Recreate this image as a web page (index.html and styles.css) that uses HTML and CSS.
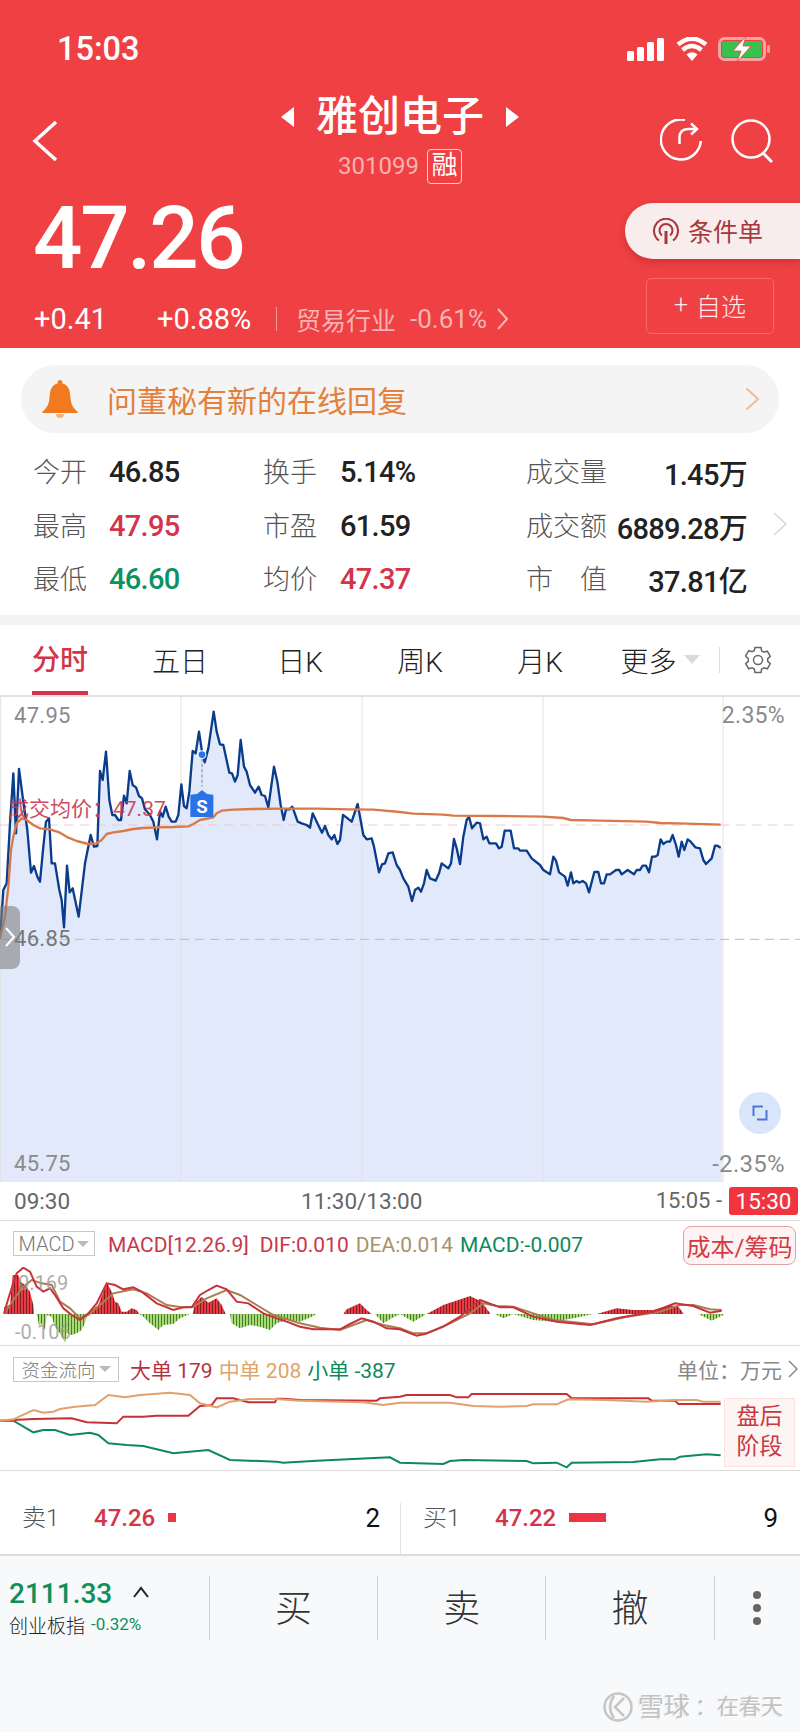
FILE: index.html
```html
<!DOCTYPE html>
<html lang="zh">
<head>
<meta charset="utf-8">
<title>雅创电子</title>
<link rel="stylesheet" href="styles.css">
</head>
<body>
<div class="page">
  <header class="header">
    <div class="status">
      <span class="clock">15:03</span>
      <span class="status-icons">
        <svg class="i-signal" viewBox="0 0 37 23"><rect x="0" y="13" width="7" height="10" rx="1.500"/><rect x="10" y="9" width="7" height="14" rx="1.500"/><rect x="20" y="4" width="7" height="19" rx="1.500"/><rect x="30" y="0" width="7" height="23" rx="1.500"/></svg>
        <svg class="i-wifi" viewBox="0 0 32 24"><path d="M16 24 10.500 17.500Q16 13 21.500 17.500Z" fill="#fff"/><path d="M6.500 13Q16 5 25.500 13M2 7.500Q16-4 30 7.500" fill="none" stroke="#fff" stroke-width="4.500"/></svg>
        <svg class="i-batt" viewBox="0 0 52 26"><rect x="1.500" y="2.500" width="45" height="21" rx="5" fill="none" stroke="#f7a3a3" stroke-width="3"/><rect x="4" y="5" width="40" height="16" rx="2" fill="#37c24e"/><rect x="49" y="9" width="3" height="8" rx="1.500" fill="#f7a3a3"/><path d="M28 0 15 15h8l-4 11 14-16h-8z" fill="#fff" stroke="#ef4043" stroke-width=".8"/></svg>
      </span>
    </div>
    <nav class="nav">
      <svg class="i-back" viewBox="0 0 26 42"><path d="M24 2 3 21l21 19" fill="none" stroke="#fff" stroke-width="3.500"/></svg>
      <div class="title-block">
        <div class="title-row">
          <span class="tri tri-l"></span>
          <span class="title">雅创电子</span>
          <span class="tri tri-r"></span>
        </div>
        <div class="code-row"><span class="code">301099</span><span class="rong">融</span></div>
      </div>
      <div class="nav-actions">
        <svg class="i-refresh" viewBox="0 0 42 42"><path d="M25 .9A20 20 0 1 0 40.800 22" fill="none" stroke="#fff" stroke-width="2.500"/><path d="M19.500 25V19Q19.500 10 28 10H36" fill="none" stroke="#fff" stroke-width="2.500"/><path d="M31 4.500l6 5.500-6 5.500" fill="none" stroke="#fff" stroke-width="2.500"/></svg>
        <svg class="i-search" viewBox="0 0 42 44"><circle cx="20" cy="20" r="18.500" fill="none" stroke="#fff" stroke-width="2.500"/><path d="m32 34 9 9" stroke="#fff" stroke-width="3"/></svg>
      </div>
    </nav>
    <div class="quote">
      <div class="quote-left">
        <div class="price">47.26</div>
        <div class="change-row">
          <span class="chg chg-a">+0.41</span>
          <span class="chg chg-b">+0.88%</span>
          <span class="sep"></span>
          <span class="ind">贸易行业</span>
          <span class="ind-val">-0.61%</span>
          <svg class="i-chev-sm" viewBox="0 0 11 22"><path d="M1 1l9 10-9 10" fill="none" stroke="#f9b4b4" stroke-width="2"/></svg>
        </div>
      </div>
      <div class="quote-right">
        <div class="pill">
          <svg class="i-cond" viewBox="0 0 26 26"><path d="M6 22.500A12 12 0 1 1 20 22.500" fill="none" stroke="#a8373b" stroke-width="2"/><path d="M9 17.500A6.500 6.500 0 1 1 17 17.500" fill="none" stroke="#a8373b" stroke-width="2"/><path d="M13 13v13" stroke="#a8373b" stroke-width="3"/></svg>
          <span class="pill-text">条件单</span>
        </div>
        <div class="watch"><span class="plus">+</span><span>自选</span></div>
      </div>
    </div>
  </header>

  <div class="notice">
    <svg class="i-bell" viewBox="0 0 36 38"><path d="M18 0c2 0 2.500 2 2.500 3.500C27 5 28 11 28.500 18c.5 6 2.500 10 7 13.500V33H.5v-1.500C5 28 7 24 7.500 18 8 11 9 5 15.500 3.500 15.500 2 16 0 18 0z" fill="#f2791d"/><path d="M14 34a4 4 0 0 0 8 0" fill="#f6b27a"/></svg>
    <span class="notice-text">问董秘有新的在线回复</span>
    <svg class="i-chev-n" viewBox="0 0 15 24"><path d="M1.500 1.500 13 12 1.500 22.500" fill="none" stroke="#f3bb92" stroke-width="2"/></svg>
  </div>

  <section class="stats">
    <span class="lbl">今开</span><span class="val">46.85</span>
    <span class="lbl">换手</span><span class="val">5.14%</span>
    <span class="lbl">成交量</span><span class="val val-r">1.45万</span>
    <span class="lbl">最高</span><span class="val up">47.95</span>
    <span class="lbl">市盈</span><span class="val">61.59</span>
    <span class="lbl">成交额</span><span class="val val-r">6889.28万</span>
    <span class="lbl">最低</span><span class="val down">46.60</span>
    <span class="lbl">均价</span><span class="val up">47.37</span>
    <span class="lbl">市　值</span><span class="val val-r">37.81亿</span>
    <svg class="i-chev-s" viewBox="0 0 14 24"><path d="M1 1l12 11L1 23" fill="none" stroke="#d4d4d4" stroke-width="1.500"/></svg>
  </section>

  <div class="gap-band"></div>

  <div class="tabs">
    <span class="tab tab-active"><span class="tab-on">分时</span></span>
    <span class="tab">五日</span>
    <span class="tab">日K</span>
    <span class="tab">周K</span>
    <span class="tab">月K</span>
    <span class="tab">更多<i class="tab-tri"></i></span>
    <svg class="i-gear" viewBox="0 0 28 28"><path d="M11 1.500h6l.7 3.500 2.300 1.300 3.300-1.100 3 5.200-2.600 2.300v2.600l2.600 2.300-3 5.200-3.300-1.100-2.300 1.300-.7 3.500h-6l-.7-3.500-2.300-1.300-3.300 1.100-3-5.200 2.600-2.300v-2.600L1.700 9.900l3-5.200L8 5.800l2.300-1.300z" fill="none" stroke="#666" stroke-width="1.500"/><circle cx="14" cy="14" r="4.500" fill="none" stroke="#666" stroke-width="1.500"/></svg>
  </div>

  <section class="chart">
    <svg class="chart-svg" viewBox="0 21 2400 1455" preserveAspectRatio="none">
      <path class="area" d="M0,745 10,600 20,580 30,400 40,250 48,430 57,237 68,320 82,420 93,548 102,528 112,560 120,575 130,470 138,395 147,385 155,520 165,520 178,600 185,630 192,712 201,527 209,607 218,595 236,680 255,520 272,435 282,470 292,468 300,243 308,270 318,185 328,330 337,375 345,375 355,390 363,390 372,317 380,340 389,243 398,285 408,292 417,318 426,325 435,358 450,375 460,395 471,448 480,365 488,380 497,350 506,380 515,395 527,395 535,375 544,283 552,348 560,355 568,305 578,183 587,190 597,125 606,185 614,217 625,175 641,65 650,125 660,163 670,165 688,248 696,250 705,275 713,255 722,150 732,230 740,245 750,285 765,308 776,290 785,315 795,318 805,352 822,230 832,275 842,345 851,390 858,358 868,358 877,350 893,395 905,400 920,405 930,413 938,370 950,395 966,428 975,408 985,435 995,448 1003,435 1012,462 1020,450 1029,375 1040,383 1055,395 1073,342 1090,435 1100,448 1115,445 1122,470 1137,547 1146,523 1155,520 1165,490 1178,487 1190,525 1200,540 1210,565 1225,590 1236,633 1245,600 1255,593 1263,605 1272,580 1280,540 1290,565 1307,572 1317,550 1325,520 1345,535 1353,520 1362,447 1370,475 1380,522 1390,440 1400,390 1407,380 1416,415 1430,398 1440,400 1450,448 1460,440 1468,460 1488,460 1497,475 1505,470 1514,422 1532,422 1542,475 1555,475 1560,482 1580,482 1595,505 1620,525 1630,540 1650,553 1660,500 1668,512 1677,547 1695,560 1703,587 1713,547 1720,580 1730,573 1737,578 1748,573 1758,580 1767,607 1783,546 1795,546 1803,580 1812,580 1820,553 1830,553 1848,540 1858,540 1865,553 1883,540 1902,553 1910,540 1920,540 1928,527 1938,527 1947,547 1956,500 1965,500 1973,495 1982,448 1990,462 2000,455 2010,455 2018,435 2028,465 2036,500 2045,455 2053,480 2063,448 2072,455 2086,472 2100,475 2110,510 2118,522 2135,505 2145,467 2152,467 2166,473 2166,1476 0,1476Z"/>
      <path class="grid" d="M543 18V1476M1086 18V1476M1629 18V1476M2169 18V1476M2 18V1476"/>
      <path class="dash-pink" d="M0 405H2400"/>
      <path class="dash-grey" d="M0 748H2400"/>
      <polyline class="line-price" points="0,745 10,600 20,580 30,400 40,250 48,430 57,237 68,320 82,420 93,548 102,528 112,560 120,575 130,470 138,395 147,385 155,520 165,520 178,600 185,630 192,712 201,527 209,607 218,595 236,680 255,520 272,435 282,470 292,468 300,243 308,270 318,185 328,330 337,375 345,375 355,390 363,390 372,317 380,340 389,243 398,285 408,292 417,318 426,325 435,358 450,375 460,395 471,448 480,365 488,380 497,350 506,380 515,395 527,395 535,375 544,283 552,348 560,355 568,305 578,183 587,190 597,125 606,185 614,217 625,175 641,65 650,125 660,163 670,165 688,248 696,250 705,275 713,255 722,150 732,230 740,245 750,285 765,308 776,290 785,315 795,318 805,352 822,230 832,275 842,345 851,390 858,358 868,358 877,350 893,395 905,400 920,405 930,413 938,370 950,395 966,428 975,408 985,435 995,448 1003,435 1012,462 1020,450 1029,375 1040,383 1055,395 1073,342 1090,435 1100,448 1115,445 1122,470 1137,547 1146,523 1155,520 1165,490 1178,487 1190,525 1200,540 1210,565 1225,590 1236,633 1245,600 1255,593 1263,605 1272,580 1280,540 1290,565 1307,572 1317,550 1325,520 1345,535 1353,520 1362,447 1370,475 1380,522 1390,440 1400,390 1407,380 1416,415 1430,398 1440,400 1450,448 1460,440 1468,460 1488,460 1497,475 1505,470 1514,422 1532,422 1542,475 1555,475 1560,482 1580,482 1595,505 1620,525 1630,540 1650,553 1660,500 1668,512 1677,547 1695,560 1703,587 1713,547 1720,580 1730,573 1737,578 1748,573 1758,580 1767,607 1783,546 1795,546 1803,580 1812,580 1820,553 1830,553 1848,540 1858,540 1865,553 1883,540 1902,553 1910,540 1920,540 1928,527 1938,527 1947,547 1956,500 1965,500 1973,495 1982,448 1990,462 2000,455 2010,455 2018,435 2028,465 2036,500 2045,455 2053,480 2063,448 2072,455 2086,472 2100,475 2110,510 2118,522 2135,505 2145,467 2152,467 2162,473"/>
      <polyline class="line-avg" points="0,745 15,680 25,590 33,480 40,440 50,400 65,385 80,390 100,405 120,415 150,418 180,428 205,443 230,453 265,462 290,460 305,450 320,432 340,427 370,423 400,417 430,414 470,412 520,411 565,409 580,402 600,390 640,382 650,370 665,362 700,359 760,357 850,356 950,356 1050,358 1120,359 1200,366 1240,371 1330,374 1360,377 1500,378 1630,380 1690,384 1712,390 1800,392 1940,395 1980,399 2060,401 2162,404"/>
      <path class="mark-dash" d="M606 205V290"/>
      <circle class="mark-dot" cx="606" cy="194" r="12"/>
      <path class="mark-box" d="M571 314l20-2 15-12 15 12 19 2V381H571Z"/>
      <text class="mark-s" x="606" y="368">S</text>
    </svg>
    <span class="ax ax-top">47.95</span>
    <span class="ax ax-mid">46.85</span>
    <span class="ax ax-bot">45.75</span>
    <span class="ax ax-rt">2.35%</span>
    <span class="ax ax-rb">-2.35%</span>
    <span class="avg-tip">成交均价：47.37</span>
    <span class="handle"><svg class="i-handle" viewBox="0 0 10 20"><path d="M1 1l8 9-8 9" fill="none" stroke="#fff" stroke-width="2"/></svg></span>
    <span class="expand"><svg class="i-expand" viewBox="0 0 16 16"><path d="M1.500 11V1.500H11M14.500 5V14.500H5" fill="none" stroke="#4a78d8" stroke-width="2"/></svg></span>
  </section>

  <div class="time-axis">
    <span>09:30</span>
    <span class="t-mid">11:30/13:00</span>
    <span class="t-end">15:05 -</span>
    <span class="t-pill">15:30</span>
  </div>

  <section class="panel panel-macd">
    <div class="panel-head">
      <span class="sel sel-macd">MACD<i class="sel-tri"></i></span>
      <span class="c-red c-first">MACD[12.26.9]</span>
      <span class="c-red">DIF:0.010</span>
      <span class="c-tan">DEA:0.014</span>
      <span class="c-green">MACD:-0.007</span>
      <span class="cost-btn">成本/筹码</span>
    </div>
    <div class="plot">
      <svg class="macd-svg" viewBox="0 291 2400 234" preserveAspectRatio="none">
        <defs>
          <pattern id="rs" width="9" height="12" patternUnits="userSpaceOnUse"><rect width="9" height="12" fill="#ea3a42"/><rect x="6" width="3" height="12" fill="#7a2226"/></pattern>
          <pattern id="gs" width="9" height="12" patternUnits="userSpaceOnUse"><rect width="9" height="12" fill="#a6dc70"/><rect x="6" width="3" height="12" fill="#4a7a34"/></pattern>
        </defs>
        <path fill="url(#rs)" d="M12,432 12,412 30,405 38,315 55,315 62,335 75,345 90,365 100,405 102,432ZM272,432 275,420 295,405 310,365 322,340 335,365 345,395 355,400 365,425 380,425 395,415 410,420 418,432ZM578,432 585,400 605,380 625,398 650,385 665,405 677,432ZM1030,432 1040,418 1080,400 1100,420 1115,432ZM1280,432 1330,405 1375,390 1410,378 1445,395 1470,430 1470,432ZM1790,432 1850,415 1900,420 1960,420 2010,405 2035,410 2050,430 2050,432Z"/>
        <path fill="url(#gs)" d="M108,432 112,440 118,470 125,460 135,480 140,435 155,440 165,470 180,490 195,518 200,490 215,495 230,490 245,480 255,460 262,432ZM418,432 430,440 450,460 475,480 490,465 520,462 540,445 570,432ZM690,432 695,460 720,475 750,465 780,470 810,480 830,460 860,450 900,455 935,440 950,432ZM1125,432 1150,460 1175,445 1200,432 1240,455 1275,435 1275,432ZM1485,432 1510,445 1540,432 1600,450 1660,455 1720,445 1780,432ZM2095,432 2135,452 2170,435 2170,432Z"/>
        <polyline class="line-dea" points="12,432 40,390 70,350 95,330 125,340 155,345 180,395 210,415 240,445 265,435 300,405 340,370 400,358 440,370 500,405 545,412 580,410 620,385 680,360 720,375 770,405 820,435 900,460 960,473 1020,480 1060,465 1100,450 1150,465 1200,475 1240,490 1280,490 1350,460 1410,430 1450,400 1490,408 1540,410 1600,430 1660,450 1780,463 1880,440 1980,425 2040,405 2080,405 2130,418 2165,420"/>
        <polyline class="line-dif" points="12,430 30,370 50,310 70,293 90,305 110,350 130,365 150,355 165,375 190,415 215,435 240,450 265,430 290,400 320,340 345,345 370,358 400,352 425,365 470,400 520,420 550,412 575,412 600,375 625,360 650,347 680,358 710,395 745,400 790,430 830,445 860,455 900,470 940,478 1020,478 1050,462 1085,445 1120,455 1160,475 1200,478 1250,497 1275,492 1330,470 1380,440 1440,390 1500,412 1540,412 1600,440 1670,455 1770,465 1850,445 1960,425 2025,400 2080,408 2130,428 2165,422"/>
      </svg>
      <span class="macd-hi">0.169</span>
      <span class="macd-lo">-0.106</span>
    </div>
  </section>

  <section class="panel panel-flow">
    <div class="panel-head panel-head-flow">
      <span class="sel sel-flow">资金流向<i class="sel-tri"></i></span>
      <span class="c-big">大单 179</span>
      <span class="c-mid">中单 208</span>
      <span class="c-green">小单 -387</span>
      <span class="unit">单位：万元</span>
      <svg class="i-chev-u" viewBox="0 0 10 18"><path d="M1 1l8 8-8 8" fill="none" stroke="#888" stroke-width="1.500"/></svg>
    </div>
    <div class="plot">
      <svg class="flow-svg" viewBox="0 648 2400 252" preserveAspectRatio="none">
        <polyline class="fl-green" points="0,752 40,752 100,787 130,780 165,780 210,795 270,788 295,795 325,820 380,825 430,828 520,850 625,840 690,870 830,875 850,878 950,872 1170,862 1200,878 1330,882 1350,873 1390,870 1580,873 1600,880 1670,878 1700,892 1715,878 1900,876 1980,868 2025,868 2040,860 2120,853 2162,856"/>
        <polyline class="fl-red" points="0,752 40,750 100,747 215,745 260,757 350,760 370,740 430,740 470,737 565,737 600,708 635,705 650,685 700,685 745,697 825,697 830,686 850,686 900,690 1130,692 1140,685 1200,680 1220,675 1350,675 1370,682 1405,682 1415,672 1700,672 1715,685 1945,685 1955,692 2025,692 2035,702 2162,702"/>
        <polyline class="fl-orange" points="0,752 40,748 100,720 130,728 160,725 180,717 225,710 285,705 325,675 375,682 420,675 510,668 570,675 600,700 650,712 690,695 750,687 825,687 900,692 1090,697 1150,705 1200,698 1350,698 1420,708 1500,710 1580,708 1600,703 1670,703 1705,688 1820,690 1940,695 2030,690 2090,690 2110,695 2162,695"/>
      </svg>
      <div class="after-box">盘后<br>阶段</div>
    </div>
  </section>

  <section class="orders">
    <div class="side side-l">
      <span class="o-lbl">卖1</span>
      <span class="o-price">47.26</span>
      <i class="o-bar o-bar-s"></i>
      <span class="o-qty">2</span>
    </div>
    <div class="side side-r">
      <span class="o-lbl">买1</span>
      <span class="o-price">47.22</span>
      <i class="o-bar o-bar-b"></i>
      <span class="o-qty">9</span>
    </div>
  </section>

  <footer class="footer">
    <div class="index">
      <div class="idx-top"><span class="idx-val">2111.33</span><svg class="i-caret" viewBox="0 0 16 12"><path d="M1 11l7-9 7 9" fill="none" stroke="#222" stroke-width="2"/></svg></div>
      <div class="idx-sub"><span class="idx-name">创业板指</span><span class="idx-chg">-0.32%</span></div>
    </div>
    <div class="act">买</div>
    <div class="act">卖</div>
    <div class="act">撤</div>
    <div class="act act-more"><i class="dot"></i><i class="dot"></i><i class="dot"></i></div>
    <div class="wm">
      <svg class="i-wm" viewBox="0 0 30 30"><circle cx="15" cy="15" r="13.500" fill="none" stroke="#c6c6c6" stroke-width="2.500"/><path d="M11 4C6 11 6 19 11 26M21 6l-9 9 9 9" fill="none" stroke="#c6c6c6" stroke-width="2.500"/></svg>
      <span class="wm-a">雪球</span><span class="wm-b">：在春天</span>
    </div>
  </footer>
</div>
</body>
</html>
```

FILE: styles.css
```css
* { box-sizing: border-box; }
html, body { margin: 0; padding: 0; }
body { width: 800px; height: 1732px; overflow: hidden; background: #fff; font-family: Roboto, "Noto Sans CJK SC", sans-serif; color: #222; }
i { display: block; font-style: normal; }
svg { display: block; flex: none; }
.page { width: 800px; height: 1732px; display: flex; flex-direction: column; position: relative; }

/* header */
.header { height: 348px; background: #ef4043; color: #fff; display: flex; flex-direction: column; flex: none; }
.status { height: 96px; padding: 32px 30px 0 57px; display: flex; justify-content: space-between; align-items: flex-start; }
.clock { font-size: 32.500px; line-height: 34px; font-weight: 500; }
.status-icons { display: flex; gap: 10px; align-items: center; margin-top: 4px; }
.i-signal { width: 37px; height: 23px; fill: #fff; margin-right: 2px; }
.i-wifi { width: 32px; height: 24px; }
.i-batt { width: 52px; height: 26px; }

.nav { height: 104px; display: grid; grid-template-columns: 1fr auto 1fr; padding: 0 32px; }
.i-back { width: 26px; height: 42px; margin-top: 24px; }
.title-block { display: flex; flex-direction: column; align-items: center; }
.title-row { display: flex; align-items: center; gap: 22px; height: 48px; margin-top: -3px; }
.title { font-size: 42px; line-height: 48px; font-weight: 500; }
.tri { width: 0; height: 0; border-top: 10px solid transparent; border-bottom: 10px solid transparent; }
.tri-l { border-right: 13px solid #fff; }
.tri-r { border-left: 13px solid #fff; }
.code-row { display: flex; align-items: center; gap: 8px; margin-top: 7px; height: 36px; }
.code { font-size: 24px; color: #f9b1b1; }
.rong { width: 35px; height: 35px; border: 1px solid #fbd0d0; border-radius: 4px; font-size: 26px; line-height: 31px; text-align: center; color: #fff; }
.nav-actions { display: flex; justify-content: flex-end; gap: 29px; margin: 23px -5px 0 0; align-items: flex-start; }
.i-refresh { width: 42px; height: 42px; }
.i-search { width: 42px; height: 44px; }

.quote { flex: 1; display: flex; justify-content: space-between; min-height: 0; }
.quote-left { padding-left: 33px; display: flex; flex-direction: column; }
.price { font-size: 87px; line-height: 92px; font-weight: 500; letter-spacing: -2.300px; margin-top: -8px; }
.change-row { display: flex; align-items: center; margin-top: 17px; height: 36px; }
.chg { font-size: 29px; font-weight: 400; color: #fff; }
.chg-a { width: 124px; padding-left: 1px; }
.chg-b { width: 119px; white-space: nowrap; }
.sep { width: 1px; height: 24px; background: #f69a9a; margin-right: 19px; }
.ind { font-size: 25px; color: #f7b4b4; width: 114px; }
.ind-val { font-size: 26px; color: #f7b4b4; width: 87px; }
.i-chev-sm { width: 11px; height: 22px; }
.quote-right { width: 175px; display: flex; flex-direction: column; align-items: flex-start; }
.pill { width: 175px; height: 56px; margin-top: 3px; background: #f9ecec; border-radius: 28px 0 0 28px; box-shadow: 0 3px 7px rgba(120,20,20,.3); display: flex; align-items: center; padding-left: 28px; gap: 9px; font-size: 25px; color: #a8373b; }
.pill-text { padding-bottom: 3px; font-weight: 400; }
.i-cond { width: 26px; height: 26px; }
.watch { width: 128px; height: 56px; margin: 19px 0 0 21px; border: 1.500px solid #f56a6e; border-radius: 5px; display: flex; align-items: center; justify-content: center; gap: 8px; font-size: 25px; font-weight: 300; color: #fdeaea; padding-bottom: 3px; }
.plus { font-size: 25px; }

/* notice */
.notice { height: 68px; margin: 17px 21px 0; flex: none; background: #f4f4f4; border-radius: 34px; display: flex; align-items: center; padding: 0 19px 0 21px; }
.i-bell { width: 36px; height: 38px; }
.notice-text { font-size: 30px; color: #e2803c; margin-left: 29px; flex: 1; font-weight: 400; }
.i-chev-n { width: 15px; height: 24px; }

/* stats */
.stats { flex: none; margin-top: 11px; padding: 0 0 10px 33px; display: grid; grid-template-columns: 76px 154px 77px 186px 82px 139px; grid-auto-rows: 53.500px; align-items: center; position: relative; }
.lbl { font-size: 27px; color: #555; font-weight: 300; white-space: nowrap; }
.val { font-size: 29px; color: #222; font-weight: 500; white-space: nowrap; letter-spacing: -.7px; margin-top: 3px; }
.val-r { text-align: right; }
.up { color: #d4344a; }
.down { color: #0c9260; }
.i-chev-s { width: 14px; height: 24px; position: absolute; left: 773px; top: 68px; }

.gap-band { height: 10px; flex: none; background: #f3f4f6; }

/* tabs */
.tabs { height: 70px; flex: none; display: grid; grid-template-columns: repeat(6, 120px) 1fr; align-items: center; position: relative; font-size: 28px; font-weight: 300; color: #222; }
.tab { display: flex; justify-content: center; align-items: center; height: 100%; white-space: nowrap; }
.tab-active { color: #d4344a; font-weight: 500; }
.tab-on { height: 100%; display: flex; align-items: center; padding: 0 1px; border-bottom: 4px solid #d4344a; width: 56px; justify-content: center; }
.tab-tri { width: 0; height: 0; margin-left: 7px; border-left: 8px solid transparent; border-right: 8px solid transparent; border-top: 9px solid #d8dade; }
.i-gear { width: 28px; height: 28px; margin-left: 24px; }
.tabs::after { content: ""; position: absolute; left: 719px; top: 22px; width: 1px; height: 26px; background: #ddd; }

/* main chart */
.chart { height: 487px; flex: none; border-top: 2px solid #e2e2e2; position: relative; }
.chart-svg { width: 800px; height: 485px; }
.area { fill: #e1e9fb; }
.grid { fill: none; stroke: #e2e2e2; stroke-width: 3; }
.dash-pink { fill: none; stroke: #efc9cf; stroke-width: 3; stroke-dasharray: 28 20; }
.dash-grey { fill: none; stroke: #b9bbc0; stroke-width: 3; stroke-dasharray: 28 17; }
.line-price { fill: none; stroke: #0a3c8c; stroke-width: 7; stroke-linejoin: round; }
.line-avg { fill: none; stroke: #d9794a; stroke-width: 7; stroke-linejoin: round; }
.mark-dash { stroke: #6a8aa6; stroke-width: 3; stroke-dasharray: 10 6; }
.mark-dot { fill: #2a72e8; stroke: #fff; stroke-width: 3; }
.mark-box { fill: #2a72e8; }
.mark-s { fill: #fff; font-size: 56px; font-weight: 700; text-anchor: middle; font-family: Roboto, sans-serif; }
.ax { position: absolute; font-size: 22px; line-height: 26px; color: #8a8a8a; letter-spacing: .3px; }
.ax-top { left: 14px; top: 6px; }
.ax-mid { left: 14px; top: 229px; color: #777; }
.ax-bot { left: 14px; top: 454px; }
.ax-rt { right: 15px; top: 6px; font-size: 23px; }
.ax-rb { right: 15px; top: 454px; font-size: 24px; }
.avg-tip { position: absolute; left: 8px; top: 99px; font-size: 21px; line-height: 26px; color: #c8394f; opacity: .9; white-space: nowrap; }
.handle { position: absolute; left: 0; top: 209px; width: 20px; height: 63px; background: rgba(128,128,128,.6); border-radius: 0 8px 8px 0; display: flex; align-items: center; padding-left: 5px; }
.i-handle { width: 10px; height: 20px; }
.expand { position: absolute; left: 739px; top: 395px; width: 42px; height: 42px; border-radius: 50%; background: #d9e5f9; display: flex; align-items: center; justify-content: center; }
.i-expand { width: 16px; height: 16px; }

/* time axis */
.time-axis { height: 39px; flex: none; display: flex; align-items: center; padding: 0 2px 0 14px; border-bottom: 1px solid #dcdcdc; font-size: 22.500px; color: #666; }
.t-mid { margin-left: 231px; }
.t-end { margin-left: auto; font-size: 22px; }
.t-pill { margin-left: 7px; width: 69px; height: 28px; background: #f0353f; color: #fff; border-radius: 3px; text-align: center; line-height: 28px; }

/* panels */
.panel { flex: none; border-bottom: 1px solid #dcdcdc; }
.panel-macd { height: 125px; }
.panel-flow { height: 125px; }
.panel-head { height: 46px; display: flex; align-items: center; padding: 0 4px 0 13px; gap: 11px; font-size: 21px; white-space: nowrap; position: relative; }
.panel-head-flow { height: 40px; gap: 6px; font-size: 21px; padding-top: 7px; }
.plot { position: relative; }
.sel { height: 25px; border: 1px solid #c8c8c8; display: flex; align-items: center; justify-content: center; color: #777; font-size: 20px; font-weight: 300; gap: 3px; }
.sel-macd { width: 82px; }
.sel-flow { width: 106px; font-size: 18.500px; }
.sel-tri { width: 0; height: 0; border-left: 6px solid transparent; border-right: 6px solid transparent; border-top: 6px solid #bbb; }
.c-red { color: #c8374a; margin-top: 3px; }
.c-first { margin-left: 2px; }
.c-tan { color: #a8916c; margin: 3px 0 0 -4px; }
.c-green { color: #0b8a5c; margin: 3px 0 0 -4px; }
.c-big { color: #b8303e; margin-left: 5px; }
.c-mid { color: #e0a468; }
.panel-head-flow .c-green { margin: 0; }
.cost-btn { margin: 3px 0 0 auto; width: 113px; height: 39px; border: 1px solid #e3a0a6; border-radius: 8px; background: #fdf3f3; color: #d43a44; font-size: 24px; display: flex; align-items: center; justify-content: center; }
.macd-svg { width: 800px; height: 78px; }
.flow-svg { width: 800px; height: 84px; }
.line-dif { fill: none; stroke: #c8323c; stroke-width: 6; }
.line-dea { fill: none; stroke: #a87f50; stroke-width: 6; }
.macd-hi, .macd-lo { position: absolute; left: 18px; font-size: 20px; color: #999; line-height: 24px; opacity: .8; }
.macd-hi { top: 4px; }
.macd-lo { top: 53px; left: 15px; }
.unit { margin-left: auto; color: #888; font-size: 21px; margin-right: 0; }
.i-chev-u { width: 10px; height: 18px; margin-right: -2px; }
.fl-red { fill: none; stroke: #c83038; stroke-width: 6; }
.fl-orange { fill: none; stroke: #e2a16a; stroke-width: 6; }
.fl-green { fill: none; stroke: #0d8a58; stroke-width: 6; }
.after-box { position: absolute; left: 724px; top: 12px; width: 71px; height: 69px; border: 1px dotted #f0d6d6; background: #fdf4f4; color: #c8393f; font-size: 23px; line-height: 30px; text-align: center; padding-top: 3px; }

/* orders */
.orders { height: 85px; flex: none; display: flex; align-items: flex-end; border-bottom: 2px solid #dcdcdc; }
.side { width: 400px; height: 51px; display: flex; align-items: flex-start; padding: 0 22px; line-height: 30px; }
.side-l { padding-right: 20px; }
.side-r { border-left: 1px solid #e2e2e2; }
.o-lbl { font-size: 24px; color: #555; width: 72px; font-weight: 300; white-space: nowrap; }
.o-price { font-size: 24px; color: #d4344a; width: 74px; font-weight: 500; }
.o-bar { height: 9px; margin-top: 10px; background: #ee3344; }
.o-bar-s { width: 8px; }
.o-bar-b { width: 37px; }
.o-qty { margin-left: auto; font-size: 26px; color: #111; }

/* footer */
.footer { flex: 1; background: #f8f9fb; display: flex; align-items: flex-start; padding-top: 20px; position: relative; }
.index { width: 209px; padding-left: 9px; flex: none; }
.idx-top { display: flex; align-items: center; height: 36px; }
.idx-val { font-size: 28px; color: #0f8f5c; font-weight: 500; width: 124px; }
.i-caret { width: 16px; height: 12px; margin-top: -4px; }
.idx-sub { display: flex; align-items: center; gap: 6px; margin-top: -1px; }
.idx-name { font-size: 19px; color: #222; font-weight: 300; }
.idx-chg { font-size: 17px; color: #0f8f5c; }
.act { width: 168.200px; height: 64px; flex: none; border-left: 1px solid #cfd0d2; display: flex; align-items: center; justify-content: center; padding-bottom: 4px; font-size: 37px; font-weight: 300; color: #333; }
.act-more { width: 86px; flex-direction: column; gap: 5px; padding-bottom: 0; }
.dot { width: 8px; height: 8px; border-radius: 50%; background: #666; }
.wm { position: absolute; left: 603px; top: 136px; display: flex; align-items: center; gap: 5px; color: #c2c2c2; text-shadow: 1px 1px 0 #fff, -1px 1px 1px #ddd; white-space: nowrap; }
.i-wm { width: 30px; height: 30px; }
.wm-a { font-size: 26px; line-height: 30px; }
.wm-b { font-size: 22px; line-height: 30px; }
```
